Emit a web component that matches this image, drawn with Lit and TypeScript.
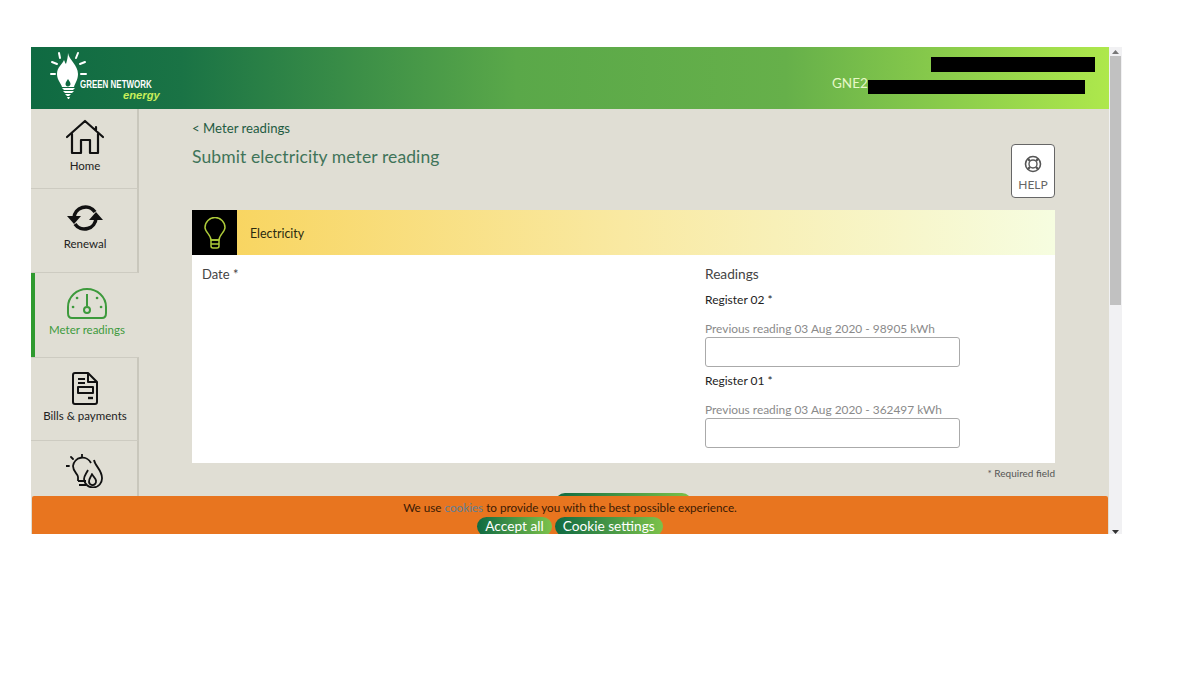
import { LitElement, html, css } from "lit";
import { customElement } from "lit/decorators.js";

@customElement("app-root")
export class AppRoot extends LitElement {
  static styles = css`
    :host { display: block; width: 1200px; height: 675px; background: #fff; font-family: "Lato", "Open Sans", "Liberation Sans", sans-serif; overflow: hidden; }
    .page { padding: 47px 0 0 31px; display: flex; }
    .frame { position: relative; display: flex; width: 1091px; height: 487px; overflow: hidden; }
    .app { width: 1078px; display: flex; flex-direction: column; background: #e0ded4; }
    .head { height: 62px; flex: none; display: flex; justify-content: space-between; background: linear-gradient(90deg, #0f6a42 0%, #1a7345 14%, #5aa849 45%, #66b04a 70%, #aee84c 100%); position: relative; }
    .logo { display: flex; width: 135px; height: 62px; box-sizing: border-box; padding: 3px 0 0 19px; position: relative; }
    .logo-text { position: absolute; left: 49px; top: 32px; color: #fff; font: 700 10.5px/11px "Liberation Sans", sans-serif; transform: scaleX(.76); transform-origin: left; white-space: nowrap; }
    .logo-energy { position: absolute; left: 92px; top: 42px; color: #c8ee5a; font: italic 700 11.2px/13px "Liberation Sans", sans-serif; white-space: nowrap; }
    .acct { color: #e7f8c8; font-size: 13.5px; padding: 28px 0 0; margin-right: 184px; width: 93px; }
    .redact { position: absolute; background: #000; }
    .r1 { left: 900px; top: 10px; width: 164px; height: 15px; }
    .r2 { left: 837px; top: 33px; width: 217px; height: 14px; }
    .body { flex: 1; display: flex; min-height: 0; }
    .side { width: 108px; flex: none; display: flex; flex-direction: column; }
    .tab { display: flex; flex-direction: column; align-items: center; box-sizing: border-box; border-right: 2px solid #c9c7bc; border-bottom: 1px solid #cdcbc1; font-size: 11.5px; color: #222; flex: none; padding-left: 2px; }
    .tab.home { height: 80px; padding-top: 10px; gap: 4px; }
    .tab.renew { height: 84px; padding-top: 14px; gap: 4px; }
    .tab.meter { height: 84px; padding: 14px 0 0 0; gap: 4px; border-right: 0; border-bottom: 0; border-left: 4px solid #2f9a2f; color: #3d9a3c; width: 108px; }
    .tab.bills { height: 84px; padding-top: 14px; gap: 4px; border-top: 1px solid #cdcbc1; }
    .tab.save { height: 60px; padding-top: 13px; border-bottom: 0; }
    .content { flex: 1; box-sizing: border-box; padding: 12px 54px 0 53px; display: flex; flex-direction: column; }
    .top { display: flex; justify-content: space-between; height: 89px; }
    .back { color: #1f5c42; font-size: 13.2px; line-height: 15px; }
    .title { color: #3f7459; font-size: 17.5px; line-height: 22px; margin-top: 10px; letter-spacing: .1px; }
    .help { width: 44px; height: 54px; margin-top: 23px; box-sizing: border-box; border: 1px solid #666; border-radius: 4px; background: #fff; display: flex; flex-direction: column; align-items: center; padding-top: 10px; gap: 5px; color: #666; font-size: 12px; line-height: 14px; }
    .card { background: #fff; height: 253px; display: flex; flex-direction: column; flex: none; }
    .card-head { height: 45px; display: flex; align-items: center; gap: 13px; background: linear-gradient(90deg, #f8d35a 0%, #f9e9a2 50%, #f6fde0 100%); font-size: 12.4px; color: #2a2a10; flex: none; }
    .card-label { padding-top: 1px; }
    .bulb { width: 45px; height: 45px; background: #000; display: flex; align-items: center; justify-content: center; }
    .cols { display: flex; padding: 11px 0 0 10px; }
    .date { width: 503px; font-size: 13px; line-height: 16px; color: #444; }
    .read { display: flex; flex-direction: column; color: #444; width: 255px; }
    .read-title { font-size: 13.7px; line-height: 16px; }
    .reg { font-size: 12px; line-height: 14px; color: #222; }
    .reg.first { margin-top: 11px; }
    .prev { font-size: 11.9px; line-height: 14px; color: #8a8a8a; margin-top: 15px; white-space: nowrap; }
    .input { height: 30px; box-sizing: border-box; border: 1px solid #aaa; border-radius: 3px; margin: 1px 0 7px; background: #fff; }
    .req { text-align: right; font-size: 10px; color: #555; line-height: 12px; margin-top: 4px; }
    .submit { align-self: flex-start; margin: 14px 0 0 363px; width: 137px; height: 20px; border-radius: 10px; background: linear-gradient(90deg, #0f6a42, #7cc24a); flex: none; }
    .cookie { position: absolute; left: 1px; top: 449px; width: 1076px; height: 38px; background: #e8751f; border-radius: 2px 2px 0 0; display: flex; flex-direction: column; align-items: center; padding-top: 4px; box-sizing: border-box; font-size: 11.7px; line-height: 15px; color: #3a1a05; overflow: hidden; }
    .cookie a { color: #5f7f94; }
    .btns { display: flex; gap: 3px; margin-top: 2px; }
    .btn { color: #fff; font-size: 13.7px; line-height: 18px; height: 19px; border-radius: 10px; padding: 0 8px; background: linear-gradient(90deg, #0f6a42, #7cc24a); white-space: nowrap; }
    .scroll { width: 13px; background: #f1f1f3; display: flex; flex-direction: column; align-items: center; }
    .arrow { height: 9px; display: flex; align-items: center; justify-content: center; flex: none; }
    .arrow.bot { height: 4px; align-items: flex-end; }
    .thumb { width: 11px; height: 249px; background: #c1c1c1; flex: none; }
    .sp { flex: 1; }
    svg { display: block; flex: none; }
  `;

  render() {
    return html`
      <div class="page"><div class="frame">
        <div class="app">
          <div class="head">
            <div class="logo">
              <svg width="38" height="50" viewBox="0 0 38 50" fill="#fff">
                <path d="M18 3 C19 10 28 15 28 24 C28 30 25 33 24 37 L12 37 C11 33 7 30 7 24 C7 17 12 15 14 10 C15 12 15 13 16 14 C17 10 18 7 18 3 Z"/>
                <path d="M18 29 C19 31 20.500 32 20.500 34 C20.500 35.500 19 36.500 18 36.500 C16.500 36.500 15.500 35.500 15.500 34 C15.500 32 17 31 18 29 Z" fill="#0f6a42"/>
                <path d="M12 38 H25 L23 40 H14 Z M13 41 H24 L22 43 H15 Z M15 44 H21 L19 46 H17 Z M17 47 H20 L19 49 H18 Z"/>
                <path d="M9 3 L10 8 M28 3 L26 8 M2 12 L7 14 M35 12 L30 14 M1 24 L5 24 M31 24 L36 24" stroke="#fff" stroke-width="2" fill="none" stroke-linecap="round"/>
              </svg>
              <div class="logo-text">GREEN NETWORK</div>
              <div class="logo-energy">energy</div>
            </div>
            <div class="acct">GNE2</div>
            <div class="redact r1"></div>
            <div class="redact r2"></div>
          </div>
          <div class="body">
            <div class="side">
              <div class="tab home">
                <svg width="40" height="36" viewBox="0 0 40 36" fill="none" stroke="#111" stroke-width="2.2" stroke-linejoin="round" stroke-linecap="round">
                  <path d="M2 18 L20 2 L38 18 M31 8 V12 M7 15 V34 H16 V21 H25 V34 H33 V15"/>
                </svg>
                <span>Home</span>
              </div>
              <div class="tab renew">
                <svg width="38" height="30" viewBox="0 0 38 30" fill="none" stroke="#111" stroke-width="3.6">
                  <path d="M8 15 A11.5 11.5 0 0 1 29 9"/>
                  <path d="M30 15 A11.5 11.5 0 0 1 9 21"/>
                  <path d="M1 13 H15 L8 21 Z M23 17 H37 L30 9 Z" fill="#111" stroke="none"/>
                </svg>
                <span>Renewal</span>
              </div>
              <div class="tab meter">
                <svg width="40" height="32" viewBox="0 0 40 32" fill="none" stroke="#3d9a3c" stroke-width="2">
                  <path d="M5 31 Q1 31 1 26 V20 A19 18 0 0 1 39 20 V26 Q39 31 35 31 Z"/>
                  <path d="M20 7 V19"/>
                  <circle cx="20" cy="23" r="3"/>
                  <path d="M10 11 h.1 M30 11 h.1 M6 20 h.1 M34 20 h.1" stroke-width="2.6" stroke-linecap="round"/>
                </svg>
                <span>Meter readings</span>
              </div>
              <div class="tab bills">
                <svg width="26" height="33" viewBox="0 0 26 33" fill="none" stroke="#111" stroke-width="2" stroke-linejoin="round">
                  <path d="M3 1 H16 L25 10 V30 Q25 32 23 32 H3 Q1 32 1 30 V3 Q1 1 3 1 Z M16 1 V10 H25"/>
                  <path d="M6 7 H13 M6 11 H13"/>
                  <rect x="6" y="15" width="15" height="6"/>
                  <path d="M16 26 H21" stroke-width="2.4"/>
                </svg>
                <span>Bills &amp; payments</span>
              </div>
              <div class="tab save">
                <svg width="38" height="34" viewBox="0 0 38 34" fill="none" stroke="#111" stroke-width="1.8" stroke-linejoin="round">
                  <path d="M12 27 V23 C12 20 7 18 7 12 A9.5 9.5 0 0 1 25 9 M12 27 H20 M13 31 H20"/>
                  <path d="M28 6 C29 12 36 16 36 24 A9 9 0 0 1 18 25 C18 22 20 20 22 16"/>
                  <path d="M26 20 C27 23 30 24 30 27 A3.5 3.5 0 0 1 23 28 C23 24 25 23 26 20 Z"/>
                  <path d="M16 0 V3 M5 3 L7 5 M0 12 H3" stroke-linecap="round"/>
                </svg>
              </div>
            </div>
            <div class="content">
              <div class="top">
                <div>
                  <div class="back">&lt; Meter readings</div>
                  <div class="title">Submit electricity meter reading</div>
                </div>
                <div class="help">
                  <svg width="18" height="18" viewBox="0 0 18 18" fill="none" stroke="#555">
                    <circle cx="9" cy="9" r="7.5" stroke-width="1.6"/>
                    <circle cx="9" cy="9" r="4" stroke-width="1.4"/>
                    <path d="M4 4 L6 6 M14 4 L12 6 M4 14 L6 12 M14 14 L12 12" stroke-width="2.4"/>
                  </svg>
                  <span>HELP</span>
                </div>
              </div>
              <div class="card">
                <div class="card-head">
                  <div class="bulb">
                    <svg width="22" height="32" viewBox="0 0 22 32" fill="none" stroke="#aecb3a" stroke-width="1.5" stroke-linejoin="round">
                      <path d="M7 23 C7 18 1 15 1 10.5 A10 10 0 0 1 21 10.5 C21 15 15 18 15 23 Z"/>
                      <path d="M7 23 H15 V29 Q15 31 13 31 H9 Q7 31 7 29 Z M7 27 H15"/>
                    </svg>
                  </div>
                  <span class="card-label">Electricity</span>
                </div>
                <div class="cols">
                  <div class="date">Date *</div>
                  <div class="read">
                    <div class="read-title">Readings</div>
                    <div class="reg first">Register 02 *</div>
                    <div class="prev">Previous reading 03 Aug 2020 - 98905 kWh</div>
                    <div class="input"></div>
                    <div class="reg">Register 01 *</div>
                    <div class="prev">Previous reading 03 Aug 2020 - 362497 kWh</div>
                    <div class="input"></div>
                  </div>
                </div>
              </div>
              <div class="req">* Required field</div>
              <div class="submit"></div>
            </div>
          </div>
        </div>
        <div class="scroll">
          <div class="arrow"><svg width="7" height="4" viewBox="0 0 7 4"><path d="M3.5 0 L7 4 H0 Z" fill="#777"/></svg></div>
          <div class="thumb"></div>
          <div class="sp"></div>
          <div class="arrow bot"><svg width="7" height="4" viewBox="0 0 7 4"><path d="M0 0 H7 L3.5 4 Z" fill="#333"/></svg></div>
        </div>
        <div class="cookie">
          <div>We use <a>cookies</a> to provide you with the best possible experience.</div>
          <div class="btns"><div class="btn">Accept all</div><div class="btn">Cookie settings</div></div>
        </div>
      </div></div>
    `;
  }
}
